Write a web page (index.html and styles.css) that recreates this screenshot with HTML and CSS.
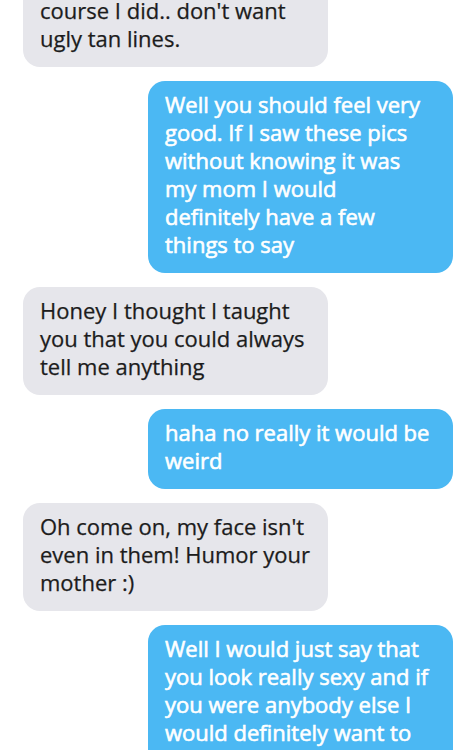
FILE: index.html
```html
<!DOCTYPE html>
<html lang="en">
<head>
<meta charset="utf-8">
<title>Messages</title>
<link rel="stylesheet" href="styles.css">
</head>
<body>
<div class="thread">
  <div class="bubble received">Haha well of<br>course I did.. don't want<br>ugly tan lines.</div>
  <div class="bubble sent">Well you should feel very<br>good. If I saw these pics<br>without knowing it was<br>my mom I would<br>definitely have a few<br>things to say</div>
  <div class="bubble received">Honey I thought I taught<br>you that you could always<br>tell me anything</div>
  <div class="bubble sent">haha no really it would be<br>weird</div>
  <div class="bubble received">Oh come on, my face isn't<br>even in them! Humor your<br>mother :)</div>
  <div class="bubble sent">Well I would just say that<br>you look really sexy and if<br>you were anybody else I<br>would definitely want to<br>see more</div>
</div>
</body>
</html>
```

FILE: styles.css
```css
html, body {
  margin: 0;
  padding: 0;
  background: #ffffff;
}

body {
  width: 469px;
  height: 750px;
  overflow: hidden;
  font-family: "Open Sans", "Noto Sans", sans-serif;
}

.thread {
  display: flex;
  flex-direction: column;
  gap: 14px;
  padding: 0 16px 0 23px;
  margin-top: -41px;
}

.bubble {
  box-sizing: border-box;
  width: 305px;
  padding: 9px 8px 15px 17px;
  border-radius: 17px;
  font-size: 22px;
  line-height: 28px;
  white-space: nowrap;
}

.received {
  align-self: flex-start;
  background: #e6e6eb;
  color: #1c1c1c;
  -webkit-text-stroke: 0.25px #1c1c1c;
}

.sent {
  align-self: flex-end;
  background: #4bb8f3;
  color: #ffffff;
  -webkit-text-stroke: 0.6px #ffffff;
}
```
